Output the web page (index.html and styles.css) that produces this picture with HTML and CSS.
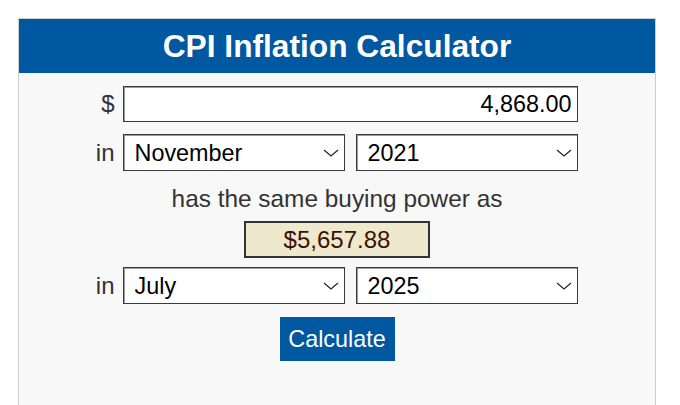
FILE: index.html
```html
<!DOCTYPE html>
<html lang="en">
<head>
<meta charset="utf-8">
<title>CPI Inflation Calculator</title>
<link rel="stylesheet" href="styles.css">
</head>
<body>
<div class="panel">
  <h1 class="panel-title">CPI Inflation Calculator</h1>
  <form class="calc">
    <div class="row">
      <span class="label">$</span>
      <input class="amount" type="text" value="4,868.00">
    </div>
    <div class="row row-select">
      <span class="label">in</span>
      <div class="pair">
        <div class="select-wrap">
          <select class="select"><option>November</option></select>
          <svg class="chev" width="16" height="8" viewBox="0 0 16 8"><path d="M1 1 L8 7 L15 1" fill="none" stroke="#222" stroke-width="1.2"/></svg>
        </div>
        <div class="select-wrap">
          <select class="select"><option>2021</option></select>
          <svg class="chev" width="16" height="8" viewBox="0 0 16 8"><path d="M1 1 L8 7 L15 1" fill="none" stroke="#222" stroke-width="1.2"/></svg>
        </div>
      </div>
    </div>
    <p class="same">has the same buying power as</p>
    <div class="result">$5,657.88</div>
    <div class="row row-select2">
      <span class="label">in</span>
      <div class="pair">
        <div class="select-wrap">
          <select class="select"><option>July</option></select>
          <svg class="chev" width="16" height="8" viewBox="0 0 16 8"><path d="M1 1 L8 7 L15 1" fill="none" stroke="#222" stroke-width="1.2"/></svg>
        </div>
        <div class="select-wrap">
          <select class="select"><option>2025</option></select>
          <svg class="chev" width="16" height="8" viewBox="0 0 16 8"><path d="M1 1 L8 7 L15 1" fill="none" stroke="#222" stroke-width="1.2"/></svg>
        </div>
      </div>
    </div>
    <button class="calc-btn" type="button">Calculate</button>
  </form>
</div>
</body>
</html>
```
FILE: styles.css
```css
html, body {
  margin: 0;
  padding: 0;
  background: #ffffff;
  font-family: "Liberation Sans", Arial, sans-serif;
}

body {
  padding: 18px 0 0 18px;
  height: 405px;
  box-sizing: border-box;
  overflow: hidden;
}

.panel {
  width: 638px;
  height: 387px;
  box-sizing: border-box;
  border: 1px solid #cccccc;
  border-bottom: none;
  background: #f8f8f8;
}

.panel-title {
  margin: 0;
  height: 54px;
  line-height: 54px;
  background: #0058a0;
  color: #ffffff;
  font-size: 31.7px;
  font-weight: bold;
  text-align: center;
}

.calc {
  display: flex;
  flex-direction: column;
  align-items: center;
  padding-top: 13px;
}

.row {
  display: flex;
  align-items: center;
  gap: 8px;
  margin-left: -1px;
}

.label {
  width: 19px;
  text-align: right;
  font-size: 24px;
  color: #333333;
}

.amount {
  width: 455px;
  height: 36px;
  box-sizing: border-box;
  margin: 0;
  border: 1px solid #3a3a3a;
  box-shadow: inset 1px 1px 0 #9a9a9a;
  background: #ffffff;
  padding: 0 5px 0 6px;
  text-align: right;
  font-family: "Liberation Sans", Arial, sans-serif;
  font-size: 23.4px;
  color: #000000;
  border-radius: 0;
  outline: none;
}

.row-select {
  margin-top: 12px;
}

.pair {
  display: flex;
  gap: 11px;
}

.select-wrap {
  position: relative;
  width: 222px;
  height: 37px;
}

.select {
  appearance: none;
  -webkit-appearance: none;
  width: 100%;
  height: 100%;
  box-sizing: border-box;
  margin: 0;
  border: 1px solid #3a3a3a;
  box-shadow: inset 1px 1px 0 #9a9a9a;
  border-radius: 0;
  background: #ffffff;
  padding: 0 30px 0 11px;
  font-family: "Liberation Sans", Arial, sans-serif;
  font-size: 23.4px;
  color: #000000;
}

.chev {
  position: absolute;
  right: 6px;
  top: 15px;
  pointer-events: none;
}

.same {
  margin: 14px 0 0 0;
  height: 28px;
  line-height: 28px;
  font-size: 24.4px;
  color: #333333;
}

.result {
  margin-top: 8px;
  width: 186px;
  height: 37px;
  box-sizing: border-box;
  border: 2px solid #333333;
  background: #eee9cd;
  color: #3b1204;
  font-size: 24px;
  line-height: 33px;
  text-align: center;
}

.row-select2 {
  margin-top: 9px;
}

.calc-btn {
  margin-top: 13px;
  width: 115px;
  height: 44px;
  border: none;
  border-radius: 0;
  background: #0058a0;
  color: #ffffff;
  font-family: "Liberation Sans", Arial, sans-serif;
  font-size: 23.4px;
  padding: 0;
}
```
